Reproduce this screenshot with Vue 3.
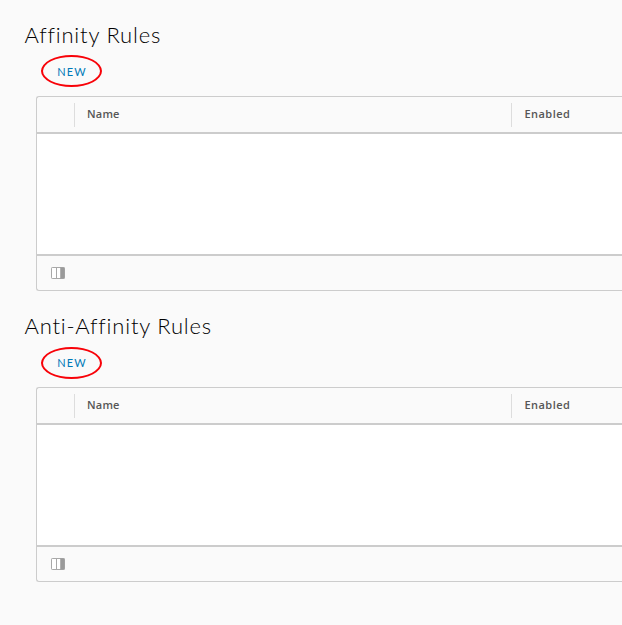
<script setup>
const sections = ['Affinity Rules', 'Anti-Affinity Rules']
</script>

<template>
  <main class="page">
    <section v-for="title in sections" :key="title" class="rules">
      <h2 class="title">{{ title }}</h2>
      <div class="actions">
        <button class="new"><span>NEW</span></button>
      </div>
      <div class="grid">
        <div class="head">
          <div class="cell select"></div>
          <div class="cell name"><span>Name</span></div>
          <div class="cell enabled"><span>Enabled</span></div>
        </div>
        <div class="body"></div>
        <div class="foot">
          <svg class="columns" width="14" height="12" viewBox="0 0 14 12">
            <rect x="0.5" y="0.5" width="13" height="11" rx="0.7" fill="#fff" stroke="#a8a8a8" />
            <path d="M5.5 1v10" stroke="#a8a8a8" />
            <rect x="9" y="0.5" width="4.5" height="11" fill="#9a9a9a" />
            <path d="M9.5 1v10" stroke="#b0b0b0" />
          </svg>
        </div>
      </div>
    </section>
  </main>
</template>

<style>
body {
  background: #fafafa;
}
</style>

<style scoped>
.page {
  box-sizing: border-box;
  width: 100%;
  height: 625px;
  padding-top: 20px;
  overflow: hidden;
  background: #fafafa;
  font-family: Lato, "Open Sans", sans-serif;
}
.rules {
  height: 291px;
}
.title {
  margin: 0;
  padding-left: 24.5px;
  height: 30px;
  line-height: 30px;
  font-size: 22px;
  font-weight: 300;
  letter-spacing: 0.79px;
  color: #000;
  white-space: nowrap;
}
.actions {
  display: flex;
  height: 46px;
  padding: 5px 0 0 41px;
  box-sizing: border-box;
}
.new {
  width: 61px;
  height: 32px;
  padding: 2px 0 0 1px;
  box-sizing: border-box;
  border: 2px solid #f80208;
  border-radius: 50%;
  background: none;
  color: #0079b8;
  font-family: inherit;
  font-size: 11px;
  letter-spacing: 1.1px;
  line-height: 14px;
}
.rules:nth-child(2) .actions {
  padding-top: 6px;
}
.rules:nth-child(2) .new {
  padding-top: 0;
}
.grid {
  box-sizing: border-box;
  height: 195px;
  margin-left: 36px;
  border: 1px solid #ccc;
  border-right: 0;
  border-radius: 3px 0 0 3px;
  overflow: hidden;
}
.head {
  display: flex;
  box-sizing: border-box;
  height: 37px;
  padding: 6px 0 5px;
  border-bottom: 2px solid #ccc;
}
.cell {
  box-sizing: border-box;
  font-family: "Open Sans", sans-serif;
  font-size: 11px;
  font-weight: 600;
  line-height: 22px;
  color: #565656;
}
.select {
  width: 37px;
}
.name {
  width: 437px;
  padding-left: 12px;
  border-left: 1px solid #ddd;
  letter-spacing: 0.2px;
}
.enabled {
  flex: 1;
  padding-left: 12.5px;
  border-left: 1px solid #ddd;
  letter-spacing: 0.45px;
}
.body {
  height: 120px;
  background: #fff;
}
.foot {
  display: flex;
  align-items: center;
  box-sizing: border-box;
  height: 36px;
  padding-left: 14px;
  border-top: 2px solid #ccc;
}
.columns {
  display: block;
}
</style>
